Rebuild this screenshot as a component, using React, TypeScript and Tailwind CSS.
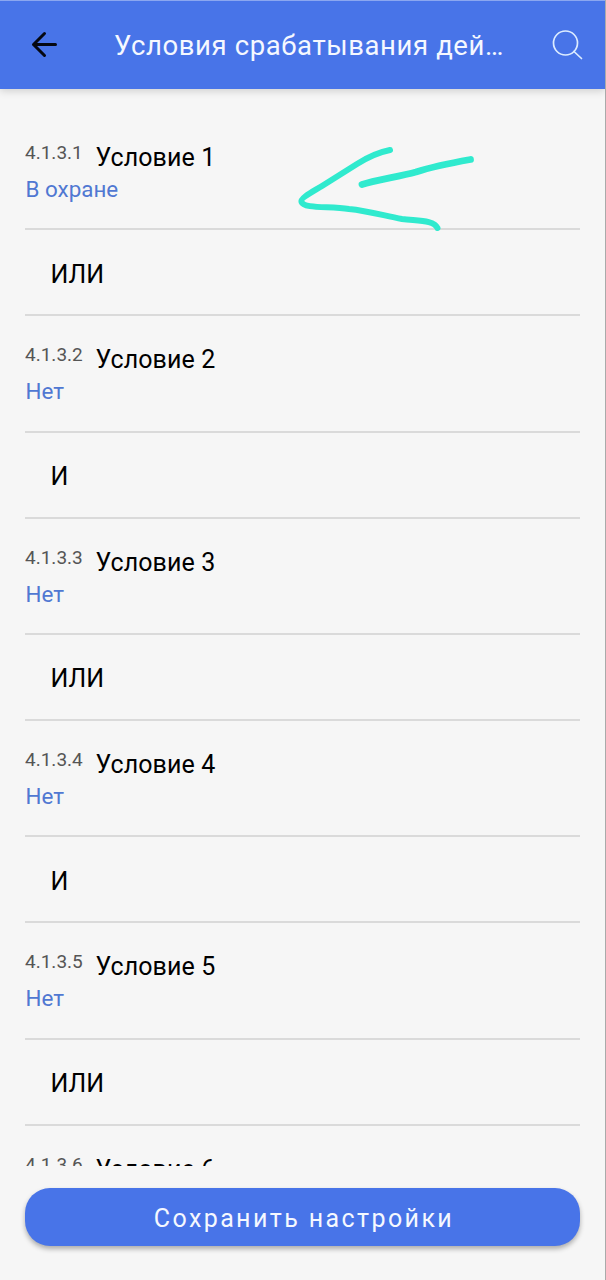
const conditions = [
  { id: "4.1.3.1", title: "Условие 1", value: "В охране", operator: "ИЛИ" },
  { id: "4.1.3.2", title: "Условие 2", value: "Нет", operator: "И" },
  { id: "4.1.3.3", title: "Условие 3", value: "Нет", operator: "ИЛИ" },
  { id: "4.1.3.4", title: "Условие 4", value: "Нет", operator: "И" },
  { id: "4.1.3.5", title: "Условие 5", value: "Нет", operator: "ИЛИ" },
  { id: "4.1.3.6", title: "Условие 6", value: "Нет", operator: "И" },
];

function Header() {
  return (
    <header className="z-10 flex h-[89px] shrink-0 items-center border-t border-[#8ba7f0] bg-[#4874e8] shadow-[0_2px_8px_rgba(0,0,0,0.16)]">
      <button aria-label="Назад" className="ml-[30px] shrink-0">
        <svg width="28" height="28" viewBox="0 0 28 28" fill="none" stroke="#050811" strokeWidth="3" strokeLinecap="round" strokeLinejoin="round">
          <path d="M25.5 13.500H3.500M14.500 2.500L3.500 13.500l11 11" />
        </svg>
      </button>
      <h1 className="ml-[56px] w-[400px] shrink-0 whitespace-nowrap pt-[1px] text-[27.5px] leading-8 tracking-[0.6px] text-[#f5f8ff]">
        Условия срабатывания дей…
      </h1>
      <button aria-label="Поиск" className="ml-[38px] shrink-0">
        <svg width="32" height="32" viewBox="0 0 32 32" fill="none" stroke="#dcecff" strokeWidth="1.7" strokeLinecap="round">
          <circle cx="13.5" cy="14" r="12" />
          <path d="M22 22.5l7.5 7" />
        </svg>
      </button>
    </header>
  );
}

function Condition({ id, title, value, operator }: (typeof conditions)[number]) {
  return (
    <>
      <section className="h-[116.2px] shrink-0 border-b-2 border-[#dadada] pt-[27px]">
        <div className="flex h-[33px] items-start">
          <span className="w-[70.5px] shrink-0 pt-[1px] text-[19px] leading-[22px] text-[#555]">{id}</span>
          <span className="pt-[2px] text-[25px] leading-[30px] tracking-[0.1px] text-black">{title}</span>
        </div>
        <div className="pl-[0.5px] text-[22.4px] leading-[30px] text-[#5078d2]">{value}</div>
      </section>
      <section className="flex h-[86.1px] shrink-0 items-center border-b-2 border-[#dadada] pl-[25.5px] pt-[5px] text-[25px] leading-[30px] text-black">
        {operator}
      </section>
    </>
  );
}

export default function App() {
  return (
    <div className="relative flex h-[1280px] w-[606px] flex-col overflow-hidden border-r border-[#aaa] bg-[#f6f6f6] font-[Roboto,sans-serif]">
      <Header />
      <main className="mx-[25px] flex h-[1077px] shrink-0 flex-col overflow-hidden pt-[25.2px]">
        {conditions.map((condition) => (
          <Condition key={condition.id} {...condition} />
        ))}
      </main>
      <button className="mx-[25px] mt-[22px] h-[58px] shrink-0 rounded-[25px] bg-[#4874e8] pl-[3px] pt-[3px] text-[25px] tracking-[2.4px] text-[#f5f8ff] shadow-[0_3px_5px_rgba(0,0,0,0.3)]">
        Сохранить настройки
      </button>
      <svg className="pointer-events-none absolute left-[280px] top-[130px]" width="220" height="110" viewBox="0 0 220 110" fill="none" stroke="#30eace" strokeLinecap="round" strokeLinejoin="round">
        <path strokeWidth="6" d="M110 20C100 22 88 27 77 34L42 56C34 61 20 68 21.500 72C24 79 49 76 69 79C89 81 105 86 122 89C139 91 154 90 157.500 98" />
        <path strokeWidth="6.800" d="M82 54.500C95 50.500 119 46.500 136 42C153 36.500 171 33 190.500 29.500" />
      </svg>
    </div>
  );
}
